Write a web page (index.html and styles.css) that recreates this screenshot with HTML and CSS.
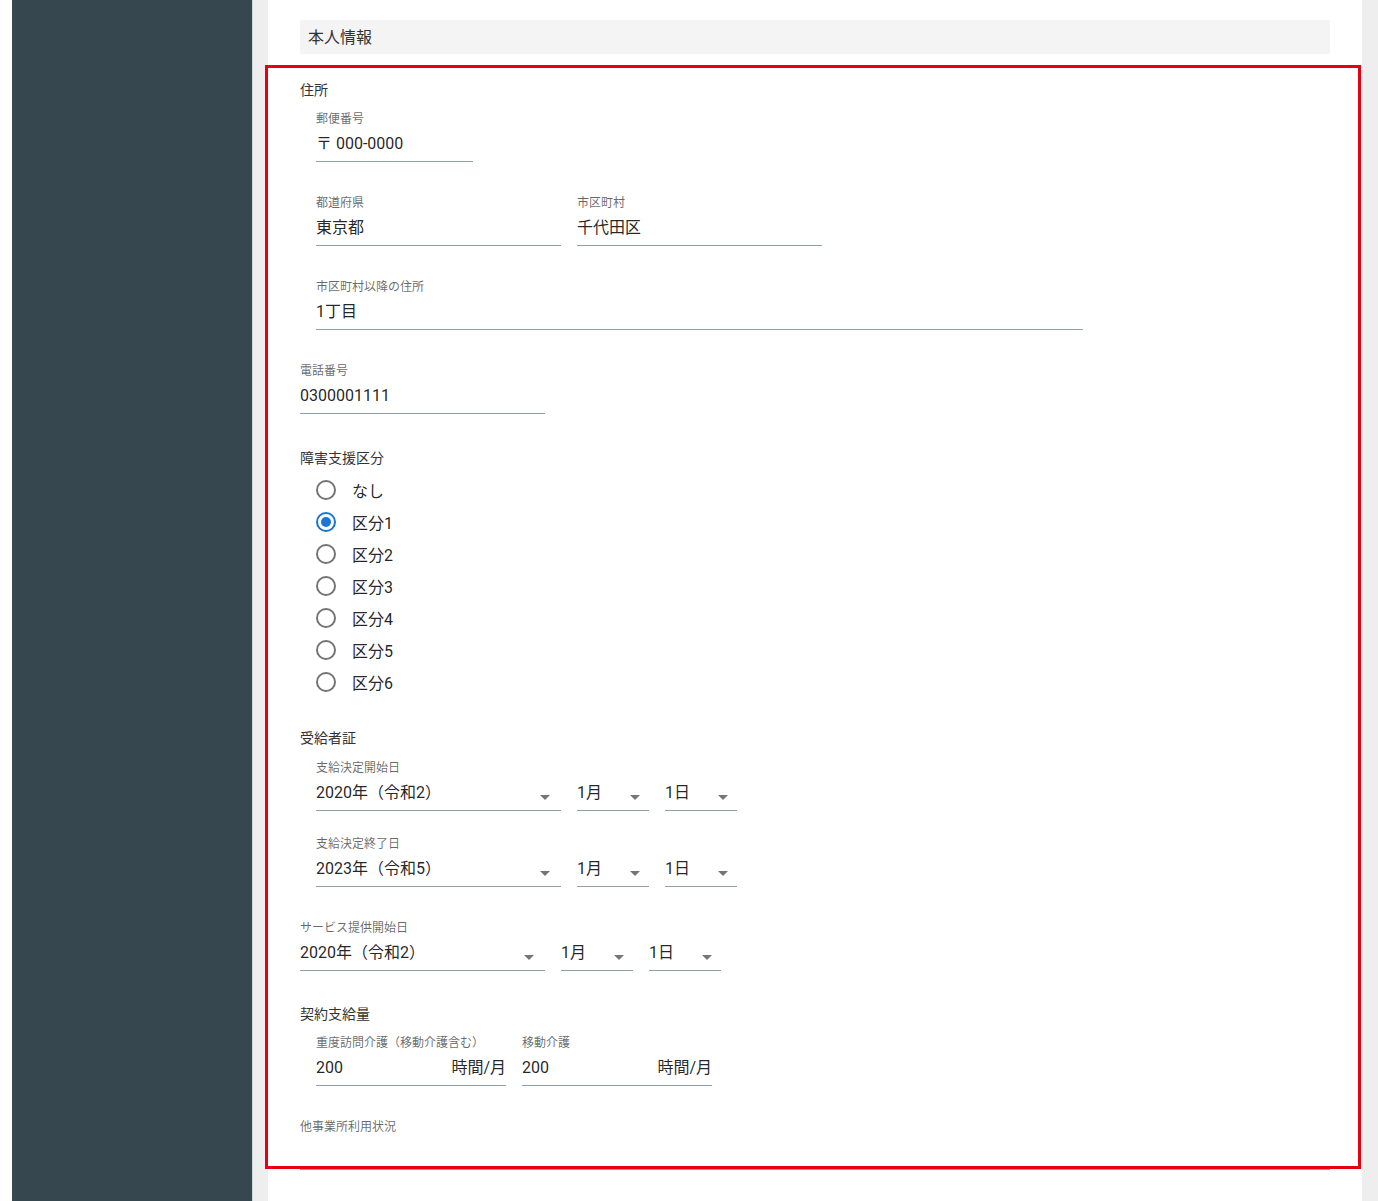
FILE: index.html
```html
<!DOCTYPE html>
<html lang="ja">
<head>
<meta charset="utf-8">
<title>本人情報</title>
<link rel="stylesheet" href="styles.css">
</head>
<body>
<div class="app">
  <aside class="sidebar"></aside>
  <main class="main">
    <div class="panel">
      <div class="section-head">本人情報</div>

      <div class="title t-first">住所</div>
      <div class="indent">
        <div class="field w157">
          <div class="label">郵便番号</div>
          <div class="control">〒 000-0000</div>
        </div>
        <div class="row">
          <div class="field w245">
            <div class="label">都道府県</div>
            <div class="control">東京都</div>
          </div>
          <div class="field w245">
            <div class="label">市区町村</div>
            <div class="control">千代田区</div>
          </div>
        </div>
        <div class="field w767">
          <div class="label">市区町村以降の住所</div>
          <div class="control">1丁目</div>
        </div>
      </div>

      <div class="field w245 f-tel">
        <div class="label">電話番号</div>
        <div class="control">0300001111</div>
      </div>

      <div class="title">障害支援区分</div>
      <div class="radios">
        <div class="radio"><span class="circle"></span><span>なし</span></div>
        <div class="radio"><span class="circle checked"></span><span>区分1</span></div>
        <div class="radio"><span class="circle"></span><span>区分2</span></div>
        <div class="radio"><span class="circle"></span><span>区分3</span></div>
        <div class="radio"><span class="circle"></span><span>区分4</span></div>
        <div class="radio"><span class="circle"></span><span>区分5</span></div>
        <div class="radio"><span class="circle"></span><span>区分6</span></div>
      </div>

      <div class="title t-cert">受給者証</div>
      <div class="indent">
        <div class="field f-tight">
          <div class="label">支給決定開始日</div>
          <div class="row">
            <div class="control select w245">2020年（令和2）<span class="arrow"></span></div>
            <div class="control select w72">1月<span class="arrow"></span></div>
            <div class="control select w72">1日<span class="arrow"></span></div>
          </div>
        </div>
        <div class="field">
          <div class="label">支給決定終了日</div>
          <div class="row">
            <div class="control select w245">2023年（令和5）<span class="arrow"></span></div>
            <div class="control select w72">1月<span class="arrow"></span></div>
            <div class="control select w72">1日<span class="arrow"></span></div>
          </div>
        </div>
      </div>

      <div class="field f-service">
        <div class="label">サービス提供開始日</div>
        <div class="row">
          <div class="control select w245">2020年（令和2）<span class="arrow"></span></div>
          <div class="control select w72">1月<span class="arrow"></span></div>
          <div class="control select w72">1日<span class="arrow"></span></div>
        </div>
      </div>

      <div class="title">契約支給量</div>
      <div class="indent">
        <div class="row">
          <div class="field w190">
            <div class="label">重度訪問介護（移動介護含む）</div>
            <div class="control amount"><span>200</span><span>時間/月</span></div>
          </div>
          <div class="field w190">
            <div class="label">移動介護</div>
            <div class="control amount"><span>200</span><span>時間/月</span></div>
          </div>
        </div>
      </div>

      <div class="field f-other">
        <div class="label">他事業所利用状況</div>
        <div class="control"></div>
      </div>
    </div>
  </main>
  <div class="highlight"></div>
</div>
</body>
</html>
```

FILE: styles.css
```css
* { box-sizing: border-box; }
html, body { margin: 0; padding: 0; }
body {
  font-family: Roboto, "Noto Sans CJK JP", "Noto Sans", sans-serif;
  color: rgba(0, 0, 0, 0.87);
  background: #fff;
}
.app {
  position: relative;
  display: flex;
  height: 1201px;
  overflow: hidden;
  padding-left: 12px;
}
.sidebar {
  flex: none;
  width: 241px;
  background: #37474f;
  border-right: 1px solid #cfd8dc;
}
.main {
  flex: 1;
  background: #eeeeee;
  padding: 0 16px 0 15px;
}
.panel {
  background: #fff;
  height: 100%;
  padding: 20px 32px 0;
}
.section-head {
  background: #f4f4f4;
  height: 34px;
  line-height: 34px;
  padding: 1px 0 0 8px;
  font-size: 16px;
  color: #333;
  border-radius: 2px;
}
.title {
  font-size: 14px;
  line-height: 20px;
  color: #333;
  margin-bottom: 11px;
}
.t-first { margin-top: 26px; }
.t-cert { margin-top: 30px; margin-bottom: 12px; }
.indent { padding-left: 16px; }
.row { display: flex; gap: 16px; }
.field { margin-bottom: 33px; }
.f-tel { margin-bottom: 34px; }
.f-tight { margin-bottom: 25px; }
.f-service { margin-bottom: 33px; }
.indent + .f-service { margin-top: 8px; }
.label {
  font-size: 12px;
  line-height: 16px;
  color: rgba(0, 0, 0, 0.6);
  white-space: nowrap;
}
.control {
  position: relative;
  display: flex;
  height: 35px;
  padding-top: 5px;
  font-size: 16px;
  line-height: 24px;
  color: rgba(0, 0, 0, 0.87);
  border-bottom: 1px solid #8fa0aa;
  white-space: nowrap;
}
.amount { justify-content: space-between; }
.w157 { width: 157px; }
.w245 { width: 245px; }
.w767 { width: 767px; }
.w190 { width: 190px; }
.w72 { width: 72px; }
.arrow {
  position: absolute;
  right: 9px;
  top: 19px;
  width: 0;
  height: 0;
  border-left: 5px solid transparent;
  border-right: 5px solid transparent;
  border-top: 5px solid #757575;
}
.select.w245 .arrow { right: 11px; }
.radios {
  margin-top: -5px;
  padding-left: 16px;
  margin-bottom: 30px;
}
.radio {
  display: flex;
  align-items: center;
  height: 32px;
  gap: 16px;
  font-size: 16px;
  color: rgba(0, 0, 0, 0.87);
}
.circle {
  flex: none;
  width: 20px;
  height: 20px;
  border: 2px solid #757575;
  border-radius: 50%;
  display: flex;
  align-items: center;
  justify-content: center;
}
.circle.checked { border-color: #1976d2; }
.circle.checked::after {
  content: "";
  width: 10px;
  height: 10px;
  border-radius: 50%;
  background: #1976d2;
}
.f-other { margin-bottom: 0; }
.highlight {
  position: absolute;
  left: 265px;
  top: 65px;
  width: 1096px;
  height: 1104px;
  border: 3px solid #e60012;
  pointer-events: none;
}
```
